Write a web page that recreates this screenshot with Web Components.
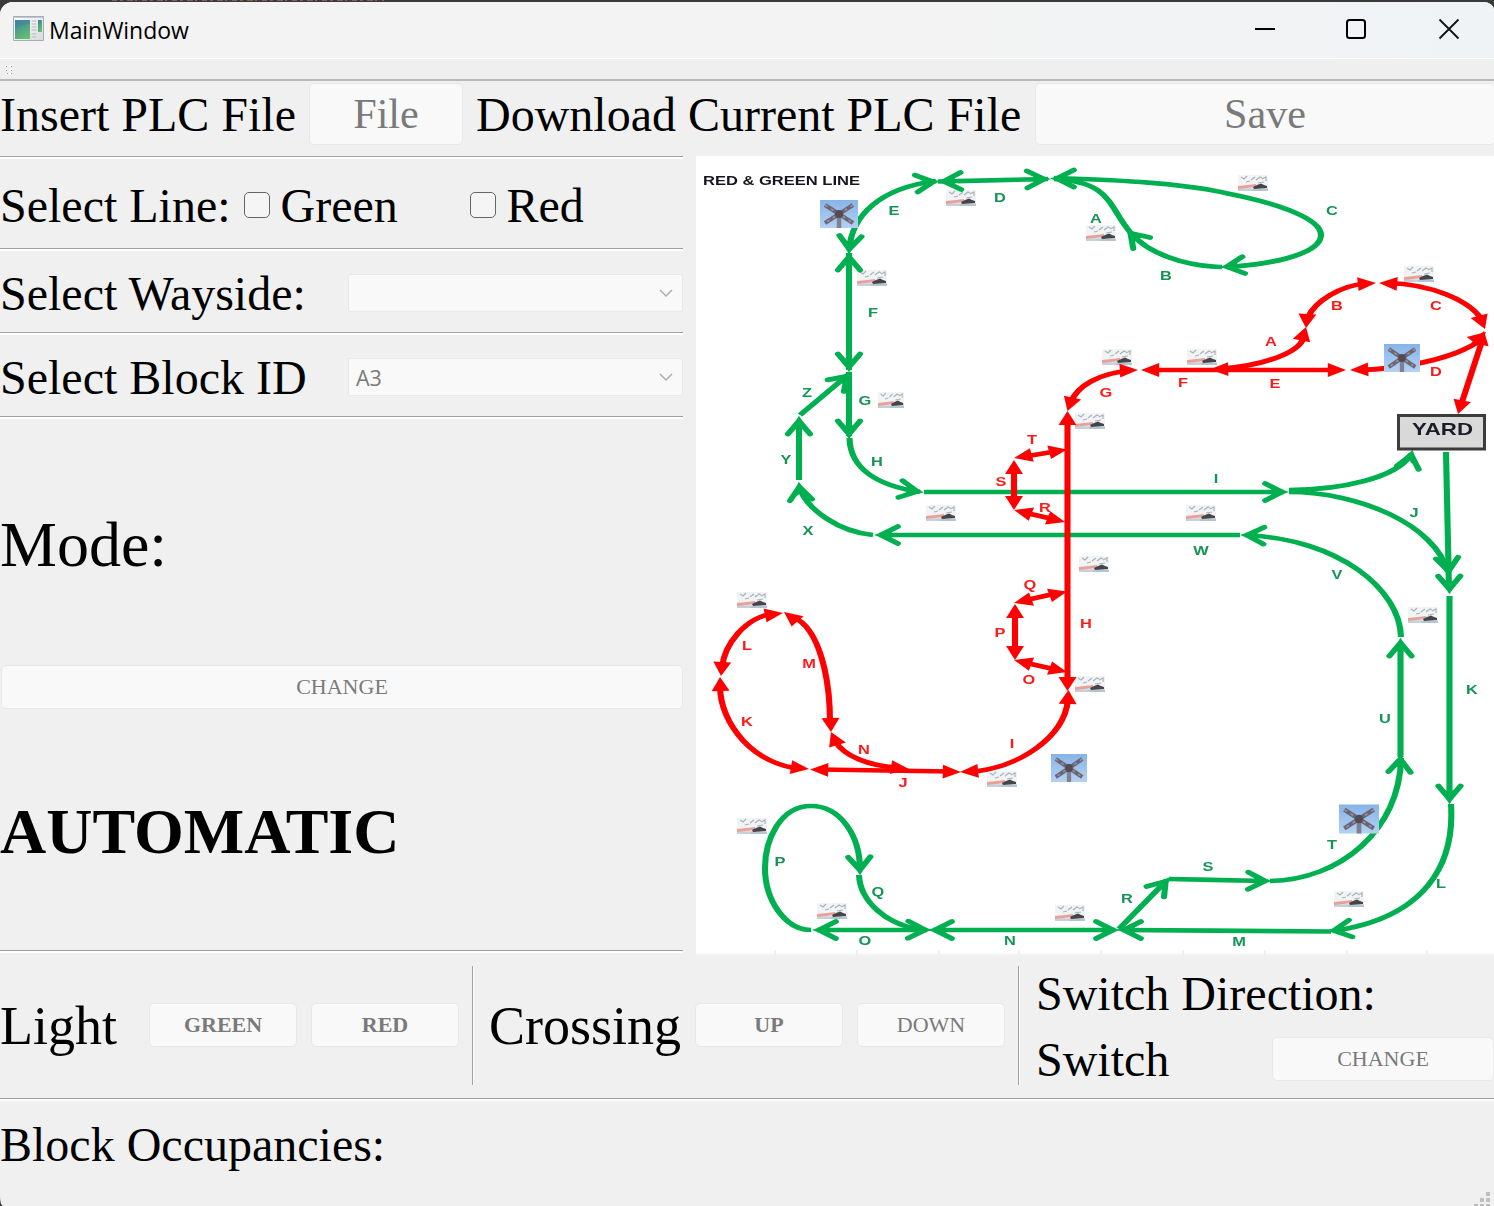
<!DOCTYPE html>
<html lang="en">
<head>
<meta charset="utf-8">
<title>MainWindow</title>
<style>
html,body{margin:0;height:100%;overflow:hidden;background:#3b3a3a}
body{font-family:"Liberation Serif",serif;color:#000}
</style>
</head>
<body>
<plc-window></plc-window>
<script>
const define = (name, html, setup) => customElements.define(name, class extends HTMLElement {
  constructor() {
    super();
    this.attachShadow({mode: 'open'}).innerHTML = html;
  }
  connectedCallback() { if (setup) setup(this, this.shadowRoot); }
});

define('q-label', `<style>:host{display:block;box-sizing:border-box;padding-top:2px;font-size:var(--size,48px);line-height:1.1;white-space:nowrap;flex:none}</style><slot></slot>`);

define('q-button', `<style>
:host{display:flex;box-sizing:border-box;align-items:center;justify-content:center;height:44px;flex:none;
background:#f9f9f9;border:1px solid #e8e8e8;border-radius:5px;color:#7a7a7a;font-size:22px;line-height:1;white-space:nowrap}
</style><slot></slot>`);

define('q-check', `<style>
:host{display:flex;align-items:center;gap:10.5px;font-size:48px;line-height:1.1;flex:none}
i{box-sizing:border-box;width:26px;height:26px;border:1.5px solid #666;border-radius:5px;background:#f5f5f5}
span{padding-top:2px}
</style><i></i><span><slot></slot></span>`);

define('q-combo', `<style>
:host{display:flex;box-sizing:border-box;align-items:center;justify-content:space-between;width:335px;height:38px;flex:none;
padding:0 9px 0 7px;background:#f9f9f9;border:1px solid #e8e8e8;border-radius:2px;color:#7a7a7a;
font:21.5px "Open Sans","Noto Sans",sans-serif;letter-spacing:-.2px}
</style><span><slot></slot></span><svg width="14" height="10" viewBox="0 0 14 10"><path d="M1 2l6 6 6-6" fill="none" stroke="#adadad" stroke-width="1.5"/></svg>`);

define('q-rule', `<style>
:host{display:block;box-sizing:border-box;height:3px;flex:none;border-top:1px solid #a0a0a0;background:#fff}
:host([vertical]){height:119px;width:3px;border-top:0;border-left:1px solid #a0a0a0;background:linear-gradient(90deg,#fff 1px,transparent 1px)}
</style>`);

define('title-bar', `<style>
:host{display:flex;box-sizing:border-box;height:57px;align-items:center;padding-left:13px;background:linear-gradient(90deg,#f3f3f3 60%,#f0f3f6);border-bottom:1px solid #fff;flex:none}
.t{flex:1;margin-left:4px;font:23px "Open Sans","Noto Sans",sans-serif;letter-spacing:-.05px}
.app{margin-bottom:2px}
.c{display:flex;gap:70px;padding-right:34px;margin-bottom:2px}
</style>
<svg class="app" width="32" height="26" viewBox="0 0 32 26">
<defs><linearGradient id="g" x1="0" y1="0" x2=".5" y2="1"><stop stop-color="#3f7f9e"/><stop offset="1" stop-color="#61bd70"/></linearGradient>
<linearGradient id="p" x1="0" y1="0" x2="1" y2="1"><stop stop-color="#fff"/><stop offset="1" stop-color="#d8dadc"/></linearGradient></defs>
<path d="M.5.500h30v24h-30z" fill="url(#p)" stroke="#a6adb5"/><path d="M1 1.500h29" stroke="#bcc8d8"/>
<path d="M2 4h15v19H2z" fill="url(#g)"/><path d="M2 13Q9 8 17 8V4H2z" fill="#3d83a5" opacity=".4"/>
<path d="M18.500 5h5M18.500 8h5M18.500 11h5M18.500 14h5M18.500 18h5M18.500 21h5" stroke="#c6c9cc" stroke-width="1.4"/>
<path d="M25 4h4v12h-4z" fill="url(#g)"/></svg>
<span class="t">MainWindow</span>
<div class="c">
<svg width="22" height="22"><path d="M1 11h20" stroke="#000" stroke-width="2"/></svg>
<svg width="22" height="22"><rect x="1" y="2" width="18" height="18" rx="2.500" fill="none" stroke="#000" stroke-width="2"/></svg>
<svg width="22" height="22"><path d="M1.500 1.500l19 19m0-19l-19 19" stroke="#111" stroke-width="1.800"/></svg>
</div>`);

define('tool-grip', `<style>
:host{display:block;box-sizing:border-box;height:22px;flex:none;background:#efefef;border-bottom:2px solid #b8b8b8}svg{display:block}
</style><svg width="20" height="20"><path d="M5 6h2v2H5zM9 6h2v2H9zM5 10h2v2H5zM9 10h2v2H9zM5 14h2v2H5zM9 14h2v2H9z" fill="#fff"/><path d="M6 7h1v1H6zM11 7h1v1h-1zM6 11h1v1H6zM11 11h1v1h-1zM7 14h1v1H7zM11 14h1v1h-1z" fill="#999"/></svg>`);

/* The diagram is drawn on a plane 1.3 times narrower than the view; its group stretches it back. */
const K = 1.3;
const GREEN = [
  'M849 250C852 215 880 188 936 181','M938 181.500L1048 179','M849 253L849 370','M800 415L849 374','M849 372L849 436',
  'M849.500 438C850 470 880 486 920 492','M924 492L1284 492','M1240 535L879 535','M873 535C840 532 806 510 799 486','M799 480L799 420',
  'M1054 178C1110 180 1180 182 1230 194C1280 204 1321 219 1321 235C1321 252 1280 264 1226 267',
  'M1222 267C1185 266 1148 254 1130 232','M1130 232C1108 206 1112 182 1054 179',
  'M1289 490C1340 490 1398 478 1411 454','M1289 492C1360 492 1435 525 1448 572','M1446 452L1449 590','M1449.500 596L1449.500 800',
  'M1451 804C1455 865 1425 918 1333 931','M1331 931.500L1122 930','M1119 929L1167 880','M1169 879L1266 881',
  'M1270 881C1340 880 1400 830 1401 758','M1400.500 757L1400.500 642','M1401 637C1400 590 1340 539 1245 535',
  'M817 930L927 930','M933 930L1115 930','M860 870C860 835 840 806 811 806C780 806 765 840 765 868C765 900 785 930 811 930',
  'M859 875C860 900 885 926 925 930'];
const GREEN_TIPS = [ /* tip x, tip y, a point behind the tip */
  [937,181.5,912,184],[849,252,851,230],[940,181.5,980,180.5],[1048,179,1000,180],[849,254,849,300],[849,370,849,300],
  [850,374,816,402],[849,437,849,400],[921,492,890,487.5],[1286,492,1200,492],[877,535,900,535],[799,484,801,500],[799,418,799,450],
  [1223,267,1250,264.5],[1128,231,1146,247],[1053,178.5,1080,178.5],[1412,452,1408,467],[1449,574,1446,550],[1449.5,592,1449,560],
  [1449.5,802,1449.5,700],[1330,931,1355,928],[1120,930,1200,930],[1168,879,1119,928],[1269,881,1200,880],[1400.5,756,1399,780],
  [1400.5,640,1400.5,700],[1243,535,1275,536],[815,930,900,930],[929,930,870,929],[931,930,980,930],[1117,930,1000,930],[860,873,859,850]];
const RED = [
  'M1388 283C1430 284 1470 300 1482 320','M1367 283.500C1340 285 1315 302 1308 317','M1217 369C1255 367 1299 355 1304 337','M1150 370L1336 370',
  'M1359 370C1400 369 1450 360 1478 342','M1482 341L1461 405','M1128 371C1100 373 1077 386 1071 402','M1067.500 420L1067.500 682',
  'M1058 451L1022 457','M1014 466L1014 503','M1022 512L1057 520','M1058 593L1022 601','M1015 612L1015 652','M1022 662L1058 670',
  'M1068 700C1064 737 1020 768 969 772','M819 769.500L951 771.500','M835 741C844 756 868 766 900 768','M793 617C820 628 830 680 830 722',
  'M774 613.500C745 617 724 645 722 668','M720 686C720 725 755 765 800 768.500'];
const RED_TIPS = [
  [1379,283,1420,285],[1485,329,1477,311],[1376,283,1345,285],[1306,328,1308,308],[1306,327,1300,345],[1210,369.5,1240,369],
  [1141,370,1200,370],[1346,370,1300,370],[1350,370,1380,369],[1486,332,1465,348],[1484,331,1459,413],[1458,414,1483,335],
  [1138,370,1110,371],[1067.5,411,1075,391],[1067.5,411,1067.5,500],[1067.5,691,1067.5,600],[1067,449.5,1014,458],[1014,458,1066,449.5],
  [1014,460,1014,480],[1014,510,1014,480],[1014,510,1064,522],[1065,522,1014,510],[1067,591.5,1014,603],[1014,603,1066,591.5],
  [1015,604,1015,630],[1015,660,1015,630],[1014,660,1066,672],[1067,672,1014,660],[1068.5,690,1067,715],[960,772,990,770],
  [810,769.5,900,771],[961,772,900,771],[831,732,840,750],[909,769,880,766],[784,612,803,625],[831,732,830,700],
  [783,613,760,616],[721,676,723,655],[720,677,721,700],[809,769,780,766]];
const GREEN_TEXT = 'E894,211 D1000,198 A1096,219 B1166,276 C1332,211 F873,313 Z807,393 G865,401 H877,462 Y786,460 X808,531 I1216,479 J1414,513 W1201,551 V1337,575 K1472,690 U1385,719 T1332,845 S1208,867 R1127,899 L1441,884 M1239,942 N1010,941 O865,941 Q878,892 P780,862';
const RED_TEXT = 'B1337,306 C1436,306 A1271,342 D1436,372 F1183,383 E1275,384 G1106,393 T1032,440 S1001,482 R1045,508 Q1030,585 P1000,633 O1029,680 H1086,624 L747,646 M809,664 K747,722 N864,750 J903,783 I1012,744';
const STATIONS = [[961,198],[872,278],[891,400,26],[1101,233],[1253,183],[1419,274],[1117,357],[1202,357],[1090,421],[941,513],[1201,513],[1094,564],[1423,615],[1090,684],[752,600],[1002,779],[752,826],[832,911],[1070,913],[1349,899]];
const CROSSINGS = [[839,214,38,28],[1402,358,36,28],[1069,768,36,28],[1359,819,40,29]];

const tracks = list => list.map(d => `<path d="${d.replace(/([\d.]+) ([\d.]+)/g, (m, x, y) => (x / K).toFixed(2) + ' ' + y)}"/>`).join('');
const tips = (list, d) => list.map(([x, y, bx, by]) => {
  const a = Math.atan2(y - by, (x - bx) / K) * 180 / Math.PI;
  return `<path d="${d}" transform="translate(${(x / K).toFixed(2)} ${y}) rotate(${a.toFixed(1)})"/>`;
}).join('');
const letters = s => s.split(' ').map(t => {
  const [x, y] = t.slice(1).split(',').map(Number);
  return `<text x="${(x / K).toFixed(2)}" y="${y + 4.2}">${t[0]}</text>`;
}).join('');

define('track-map', `<style>
:host{display:block;width:798px;height:799px;background:#fff;overflow:hidden}
svg{display:block}
.soft{filter:blur(.5px)}
text{font-family:"Liberation Sans",Arial,sans-serif;font-weight:bold}
.l text{font-size:12.6px;text-anchor:middle}
.t{fill:none;stroke-width:4.7}
</style>
<svg width="798" height="799" viewBox="696 156 798 799">
<defs>
<g id="st"><path d="M0 0h30v16H0z" fill="#f1f3f5"/><path d="M3 2l3 2 3-3M13 5l4-3M18 5l4-3 2 1M24 4l4-2v4M8 7l4-1M20 8l6-1" stroke="#a9b3bc" stroke-width="1.200" fill="none"/>
<path d="M0 13.500h30v2.500H0z" fill="#b4c4d1"/><path d="M0 11l10-1 8-1v3L0 14z" fill="#e8a09a"/><path d="M15 12l4-2 4-1.500 3 1.500 3 1v2l-13 1z" fill="#45444a"/><path d="M0 15h14" stroke="#d9dde0"/></g>
<g id="cr"><linearGradient id="sky" x2="0" y2="1"><stop stop-color="#86b4e8"/><stop offset="1" stop-color="#b4d1f2"/></linearGradient>
<path d="M0 0h38v28H0z" fill="url(#sky)"/><path d="M19 14v14" stroke="#80808f" stroke-width="4.500"/>
<path d="M5 5l28 18M33 5L5 23" stroke="#6b6675" stroke-width="4.300"/><path d="M5 5l28 18M33 5L5 23" stroke="#9a94a0" stroke-width="1.500" stroke-dasharray="3 4"/>
<circle cx="19" cy="14" r="4" fill="#514b57"/></g>
</defs>
<path d="M696 954h798" stroke="#f8f8f8" stroke-width="2"/>
<path d="M775 950v5M857 950v5M939 950v5M1019 950v5M1101 950v5M1183 950v5M1265 950v5M1347 950v5M1427 950v5" stroke="#ececec" stroke-width="1.500"/>
<g class="soft">
${STATIONS.map(([x, y, w = 30]) => `<use href="#st" transform="translate(${x - w / 2} ${y - 8}) scale(${w / 30} 1)"/>`).join('')}
<g transform="scale(${K} 1)">
<g class="t" stroke="#00b050">${tracks(GREEN)}</g>
<g fill="none" stroke="#00b050" stroke-width="4.700" stroke-linecap="round" stroke-linejoin="miter">${tips(GREEN_TIPS, 'M-16 -8.500L-3 0L-16 8.500M-9 -3L-3 0L-9 3')}</g>
<g fill="#00b050">${tips(GREEN_TIPS, 'M0 0L-8 -5.500V5.500Z')}</g>
<g class="t" stroke="#f00">${tracks(RED)}</g>
<g fill="#f00">${tips(RED_TIPS, 'M0 0L-14 -6.9V6.9Z')}</g>
<g class="l" fill="#149455">${letters(GREEN_TEXT)}</g>
<g class="l" fill="#ff1a1a">${letters(RED_TEXT)}</g>
</g>
${CROSSINGS.map(([x, y, w, h]) => `<use href="#cr" transform="translate(${x - w / 2} ${y - h / 2}) scale(${w / 38} ${h / 28})"/>`).join('')}
<path d="M1398.500 415.500h86v33.500h-86z" fill="#d9d9d9" stroke="#3c3c3c" stroke-width="3"/>
<text x="1412" y="435" font-size="17" fill="#1c1c28" textLength="61" lengthAdjust="spacingAndGlyphs">YARD</text>
<text x="703" y="185" font-size="12.600" fill="#15151c" textLength="157" lengthAdjust="spacingAndGlyphs">RED &amp; GREEN LINE</text>
</g>
</svg>`);

define('plc-window', `<style>
:host{display:flex;flex-direction:column;width:1494px;height:1206px;overflow:hidden}
.behind{height:2px;flex:none;display:block}
.win{flex:1;min-height:0;display:flex;flex-direction:column;background:#f0f0f0;border-radius:13px 11px 0 3px / 13px 8px 0 9px;overflow:hidden}
.files{display:flex;align-items:center;height:75px;box-sizing:border-box;padding-bottom:9px;flex:none}
.files q-button{height:62px;font-size:42.200px}
.main{display:flex;justify-content:space-between;height:799px;flex:none}
.left{width:683px;display:flex;flex-direction:column}
.row{display:flex;align-items:center;box-sizing:border-box;height:81px;padding-top:3px}
.row.line{height:89px}
.big{display:flex;align-items:center;box-sizing:border-box;--size:64px}
.ctl{display:flex;align-items:center;box-sizing:border-box;height:143px;padding:11px 0 13px;flex:none}
.ctl q-button{width:148px}
.ctl > q-button{margin-bottom:1px}
.dir{display:flex;flex-direction:column;margin-left:15px;width:459px;gap:11px;padding-top:1px}
.dir div{display:flex;justify-content:space-between;align-items:center}
.dir q-button{width:222px}
.foot{flex:1;min-height:0;display:flex;justify-content:space-between;padding-top:15.500px;box-sizing:border-box}
.foot svg{align-self:flex-end;flex:none}
</style>
<svg class="behind" width="1494" height="2"><path d="M112 .5H384" stroke="#96705e" stroke-dasharray="5 3 3 4 6 2 2 5" opacity=".8"/></svg>
<div class="win">
<title-bar></title-bar>
<tool-grip></tool-grip>
<div class="files">
<q-label style="width:309px">Insert PLC File</q-label><q-button style="width:154px">File</q-button>
<q-label style="width:559px;margin-left:13px">Download Current PLC File</q-label><q-button style="width:460px">Save</q-button>
</div>
<div class="main">
<div class="left">
<q-rule></q-rule>
<div class="row line"><q-label style="width:244px">Select Line:</q-label><q-check style="width:226px">Green</q-check><q-check>Red</q-check></div>
<q-rule></q-rule>
<div class="row"><q-label style="width:348px">Select Wayside:</q-label><q-combo></q-combo></div>
<q-rule></q-rule>
<div class="row"><q-label style="width:348px">Select Block ID</q-label><q-combo>A3</q-combo></div>
<q-rule></q-rule>
<div class="big" style="height:246px;padding-top:4px"><q-label>Mode:</q-label></div>
<q-button style="margin-left:1px">CHANGE</q-button>
<div class="big" style="height:241px;padding-top:3px;font-weight:bold"><q-label>AUTOMATIC</q-label></div>
<q-rule></q-rule>
</div>
<track-map></track-map>
</div>
<div class="ctl">
<q-label style="--size:54px;width:149px">Light</q-label><q-button style="font-weight:bold">GREEN</q-button><q-button style="font-weight:bold;margin-left:14px">RED</q-button>
<q-rule vertical style="margin-left:13px"></q-rule>
<q-label style="--size:54px;width:206px;margin-left:14px">Crossing</q-label><q-button style="font-weight:bold">UP</q-button><q-button style="margin-left:14px">DOWN</q-button>
<q-rule vertical style="margin-left:13px"></q-rule>
<div class="dir"><q-label>Switch Direction:</q-label><div><q-label>Switch</q-label><q-button>CHANGE</q-button></div></div>
</div>
<q-rule></q-rule>
<div class="foot"><q-label>Block Occupancies:</q-label>
<svg width="20" height="16"><path d="M12 2h4v4h-4zM6 8h4v4H6zM12 8h4v4h-4zM0 14h4v2H0zM6 14h4v2H6zM12 14h4v2h-4z" fill="#bfbfbf"/></svg></div>
</div>`);
</script>
</body>
</html>
